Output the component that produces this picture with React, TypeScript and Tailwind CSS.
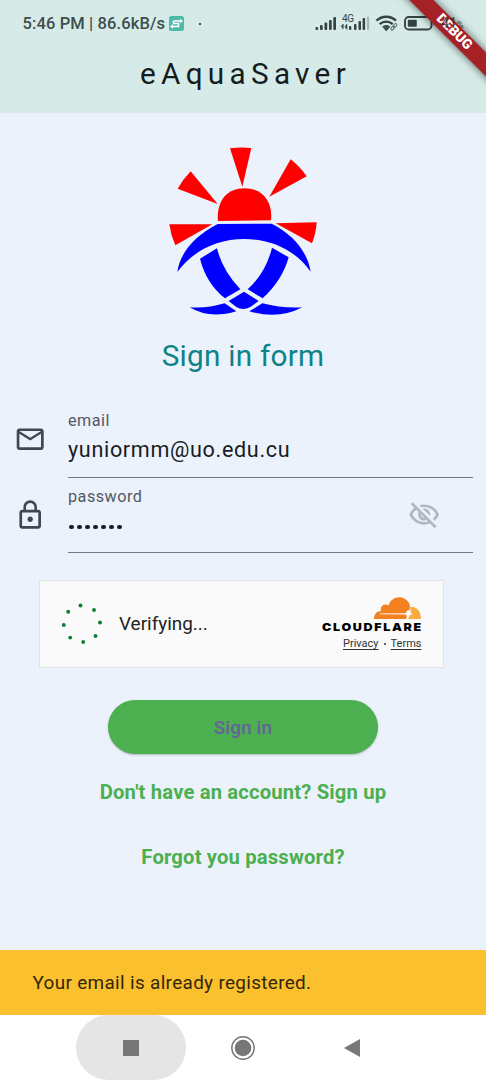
import type { ReactNode } from "react";

function StatusBar() {
  return (
    <div className="flex h-[48px] items-center pl-[22.5px] text-[#3d4d4d]">
      <span className="w-[143px] whitespace-nowrap text-[16.5px] leading-[20px] font-medium tracking-[0.12px]">5:46 PM | 86.6kB/s</span>
      <svg className="ml-[3.5px] h-[15px] w-[15px] -translate-y-[1px]" viewBox="0 0 15 15">
        <rect width="15" height="15" rx="2.5" fill="#4cb9a9" />
        <path d="M4.500 5H13M4.500 5V7.500H8M2 10.500h7.500V7.500H7" fill="none" stroke="#fff" strokeWidth="1.500" />
        <path d="M11 2.800L14 5L11 7.200ZM4 8.300L1 10.500L4 12.700Z" fill="#fff" />
      </svg>
      <span className="ml-[14.5px] h-[2px] w-[2px] bg-[#3d4d4d]" />
      <svg className="ml-[113.5px] h-[26px] w-[154px]" viewBox="0 0 154 26">
        <g fill="#344342" transform="translate(0 1)">
          <rect x="1.5" y="15" width="2.7" height="3" rx="1" />
          <rect x="6" y="13" width="2.7" height="5" rx="1" />
          <rect x="10.5" y="10.5" width="2.7" height="7.5" rx="1" />
          <rect x="15" y="8" width="2.7" height="10" rx="1" />
          <rect x="19.3" y="5" width="2.7" height="13" rx="1" />
          <path d="M28.300 16.500v-2H27l2.300-2.500v4.500zM32 12.500v2h-1.300L33 17.500v-5z" stroke="#344342" strokeWidth=".5" />
          <rect x="35" y="14" width="2.3" height="4" rx="1" />
          <rect x="40" y="12" width="2.5" height="6" rx="1" />
          <rect x="44.5" y="9" width="2.5" height="9" rx="1" />
          <rect x="48.6" y="6" width="2.5" height="12" rx="1" />
          <rect x="53" y="4.5" width="2.2" height="13.5" rx="1" opacity=".3" />
        </g>
        <text x="28" y="11" fontSize="10" fill="#344342" textLength="12">4G</text>
        <g fill="none" stroke="#344342" strokeWidth="2.3">
          <path d="M62.500 9.700a14 14 0 0 1 19.500 0M65.700 13.200a9.500 9.500 0 0 1 13 0M69 16.500a5 5 0 0 1 6.600 0" />
        </g>
        <path d="M69.500 17.200q2.800-2 5.600 0l-2.800 3z" fill="#344342" />
        <g fill="none" stroke="#5f6e6d" strokeWidth="1">
          <rect x="76.500" y="16" width="4.500" height="2.500" rx="1.2" transform="rotate(-50 78.5 17.2)" />
          <rect x="79" y="13.500" width="4.500" height="2.500" rx="1.2" transform="rotate(-50 81 15)" />
        </g>
        <rect x="91" y="6" width="26.5" height="12.5" rx="3.8" fill="none" stroke="#344342" strokeWidth="1.900" />
        <rect x="93.800" y="8.800" width="9" height="7" rx="1" fill="#344342" />
        <path d="M119.500 10.300v4.400q2-2.200 0-4.400" fill="#344342" />
      </svg>
    </div>
  );
}

function DebugBanner() {
  return (
    <div className="absolute top-0 right-0 h-[120px] w-[120px] overflow-hidden">
      <div className="absolute top-[24.2px] left-[-12px] flex h-[16.5px] w-[200px] rotate-45 items-center justify-center bg-[#a62126] text-[13.8px] leading-none font-black text-white shadow-[0_0_8px_rgba(0,0,0,0.65)]">
        <span>DEBUG</span>
      </div>
      <span className="absolute top-[15px] left-[75px] text-[14px] leading-[16px] font-medium text-[#30201f]/75">41<span className="text-[9px]">%</span></span>
    </div>
  );
}

function Logo() {
  return (
    <svg className="h-[190px] w-[180px]" viewBox="0 0 540 570">
      <g fill="#f00">
        <path d="M225 40Q257 36 289 39L262 155Z" />
        <path d="M407 73Q434 94 455 124L343 185Z" />
        <path d="M107 109L188 207L68 161Q84 133 107 109Z" />
        <path d="M43 268L172 268L61 331Q47 300 43 268Z" />
        <path d="M362 265L485 262Q483 295 471 325Z" />
        <path d="M189 258C184 202 213 160 268 160C325 160 354 202 348 256Z" />
      </g>
      <g fill="#00f">
        <path d="M188 267L350 266C414 298 457 349 467 410C422 346 350 312 268 312C187 312 117 345 67 411C75 353 120 302 188 267Z" />
        <path d="M135 371L186 340Q201 404 256 463L210 490Q154 446 135 371Z" />
        <path d="M351 338L401 367Q382 436 323 490L278 463Q333 413 351 338Z" />
        <path d="M267 470L311 498L286 516Q264 528 244 516L221 498Z" />
        <path d="M104 517Q157 521 209 505L244 529Q163 553 104 517Z" />
        <path d="M442 517Q379 520 322 505L283 529Q370 555 442 517Z" />
      </g>
    </svg>
  );
}

function Field({ icon, label, children }: { icon: ReactNode; label: string; children: ReactNode }) {
  return (
    <div className="flex h-[75.5px] pr-[13.5px]">
      <div className="flex w-[68px] shrink-0 items-center pb-[1px] pl-[13.5px]">{icon}</div>
      <div className="relative flex grow flex-col border-b border-[#747981] pt-[8px]">
        <span className="text-[16.2px] leading-[22px] tracking-[0.5px] text-[#535862]">{label}</span>
        {children}
      </div>
    </div>
  );
}

function MailIcon() {
  return (
    <svg className="h-[32.4px] w-[32.4px]" viewBox="0 0 24 24" fill="#42464e">
      <path d="M22 6c0-1.100-.9-2-2-2H4c-1.100 0-2 .9-2 2v12c0 1.100.9 2 2 2h16c1.100 0 2-.9 2-2V6zm-2 0-8 5-8-5h16zm0 12H4V8l8 5 8-5v10z" />
    </svg>
  );
}

function LockIcon() {
  return (
    <svg className="h-[32.4px] w-[32.4px]" viewBox="0 0 24 24" fill="#42464e">
      <path d="M12 17c1.100 0 2-.9 2-2s-.9-2-2-2-2 .9-2 2 .9 2 2 2zm6-9h-1V6c0-2.760-2.240-5-5-5S7 3.240 7 6v2H6c-1.100 0-2 .9-2 2v10c0 1.100.9 2 2 2h12c1.100 0 2-.9 2-2V10c0-1.100-.9-2-2-2zM8.900 6c0-1.710 1.390-3.100 3.100-3.100s3.100 1.390 3.100 3.100v2H8.900V6zM18 20H6V10h12v10z" />
    </svg>
  );
}

function EyeOffIcon() {
  return (
    <svg className="h-[32.4px] w-[32.4px]" viewBox="0 0 24 24" fill="#b2b6bd">
      <path d="M12 6c3.790 0 7.170 2.130 8.820 5.500-.59 1.220-1.420 2.270-2.410 3.120l1.410 1.410c1.390-1.230 2.490-2.770 3.180-4.530C21.270 7.110 17 4 12 4c-1.270 0-2.490.2-3.640.57l1.650 1.650C10.660 6.090 11.320 6 12 6zm-1.070 1.140L13 9.210c.57.25 1.030.71 1.280 1.280l2.070 2.070c.08-.34.14-.7.14-1.070C16.500 9.010 14.480 7 12 7c-.37 0-.72.05-1.070.14zM2.010 3.870l2.680 2.680C3.060 7.830 1.770 9.530 1 11.500 2.730 15.890 7 19 12 19c1.520 0 2.980-.29 4.320-.82l3.420 3.420 1.410-1.410L3.420 2.450 2.010 3.870zm7.500 7.500 2.610 2.610c-.04.01-.08.02-.12.02-1.380 0-2.500-1.120-2.500-2.500 0-.05.01-.08.01-.13zm-3.400-3.400 1.750 1.750c-.23.55-.36 1.150-.36 1.780 0 2.480 2.020 4.500 4.500 4.500.63 0 1.230-.13 1.770-.36l.98.98c-.88.24-1.800.38-2.750.38-3.790 0-7.170-2.130-8.820-5.500.7-1.430 1.720-2.610 2.930-3.530z" />
    </svg>
  );
}

const spinnerDots = [
  [21.5, 3.5], [35, 8], [41, 20.5], [36.5, 34], [24.2, 40], [11.2, 35.6], [4.800, 23], [9.200, 9.800],
];

function Turnstile() {
  return (
    <div className="ml-[39px] flex h-[88px] w-[405px] items-center border-[1.500px] border-[#e0e2e5] bg-[#fafafa] pl-[19px]">
      <svg className="h-[44px] w-[44px]" viewBox="0 0 44 44">
        {spinnerDots.map(([x, y]) => (
          <circle key={`${x}-${y}`} cx={x} cy={y} r="1.950" fill="#098035" />
        ))}
      </svg>
      <span className="ml-[16px] w-[90px] text-[18.9px] leading-[24px] text-[#232323]">Verifying...</span>
      <div className="ml-auto mr-[20.500px] flex w-[102px] flex-col items-end pt-[2px]">
        <svg className="mr-[1.500px] h-[22px] w-[47px]" viewBox="0 0 47 22">
          <path d="M0 22C0 17 3 14 7 14C5.500 9 11 5.500 14.500 8.500C17-1 30-3 35 6C37 10 35.500 14 33.500 17L32 22Z" fill="#f48120" />
          <path d="M34 22L37 14.500L36 10.500C42 8.500 47 14 47 22Z" fill="#faad3f" />
          <path d="M6 16.400L31.500 16.200L34.300 12.500L35.500 15.800L39 17L35.500 18.300L34 21.500L32 17.500L6 17.300Z" fill="#fff" />
        </svg>
        <span className="mt-[1px] w-[101px] origin-left scale-x-[1.140] text-left font-['Inter'] text-[11px] leading-[14px] font-black tracking-[1.450px] text-black">CLOUDFLARE</span>
        <div className="mr-[1px] mt-[2.500px] flex items-center text-[11px] leading-[16px] text-[#333]">
          <span className="underline underline-offset-2">Privacy</span>
          <span className="mx-[5px] h-[2px] w-[2px] rounded-full bg-[#333]" />
          <span className="underline underline-offset-2">Terms</span>
        </div>
      </div>
    </div>
  );
}

function NavigationBar() {
  return (
    <nav className="flex h-[65px] bg-white pl-[76px]">
      <div className="flex w-[110px] items-center justify-center rounded-[33px] bg-[#e5e5e5]">
        <div className="h-[16px] w-[16px] bg-[#777]" />
      </div>
      <svg className="ml-[45px] mt-[20.500px] h-[24px] w-[24px]" viewBox="0 0 24 24">
        <circle cx="12" cy="12" r="11.200" fill="none" stroke="#777" strokeWidth="1.400" />
        <circle cx="12" cy="12" r="8.300" fill="#777" />
      </svg>
      <svg className="ml-[89px] mt-[23.500px] h-[18px] w-[16px]" viewBox="0 0 16 18">
        <path d="M0 9L16 0V18Z" fill="#777" />
      </svg>
    </nav>
  );
}

export default function App() {
  return (
    <main className="relative flex h-[1080px] w-[486px] flex-col overflow-hidden bg-[#ebf2fb] font-['Roboto',sans-serif]">
      <header className="h-[113px] bg-[#d6ebe8]">
        <StatusBar />
        <h1 className="pl-[5px] pt-[7px] text-center text-[29.700px] leading-[38px] tracking-[5.300px] text-[#151c1e]">eAquaSaver</h1>
      </header>
      <DebugBanner />
      <div className="mt-[22px] ml-[155px] h-[190px]">
        <Logo />
      </div>
      <h2 className="mt-[11px] h-[40px] text-center text-[29.700px] leading-[40px] tracking-[0.250px] text-[#0d8387]">Sign in form</h2>
      <form className="mt-[26px]">
        <Field icon={<MailIcon />} label="email">
          <span className="mt-[2.500px] text-[21.600px] leading-[30px] tracking-[0.650px] text-[#191c22]">yuniormm@uo.edu.cu</span>
        </Field>
        <Field icon={<LockIcon />} label="password">
          <div className="mt-[17px] flex gap-[3.200px] pl-[1px]">
            {[0, 1, 2, 3, 4, 5, 6].map((i) => (
              <span key={i} className="h-[4.800px] w-[4.800px] rounded-full bg-[#191c22]" />
            ))}
          </div>
          <div className="absolute top-[21px] right-[32px]">
            <EyeOffIcon />
          </div>
        </Field>
      </form>
      <div className="mt-[26.500px]">
        <Turnstile />
      </div>
      <button className="mx-auto mt-[32px] h-[54px] w-[270px] shrink-0 rounded-full bg-[#4caf50] text-[18.900px] leading-[55px] font-medium tracking-[0.130px] text-[#65639a] shadow-[0_1px_2px_rgba(0,0,0,0.25)]">Sign in</button>
      <a className="mt-[24px] text-center text-[20.250px] leading-[28px] font-bold tracking-[0.150px] text-[#4caf50]">Don't have an account? Sign up</a>
      <a className="mt-[37px] text-center text-[20.250px] leading-[28px] font-bold tracking-[0.150px] text-[#4caf50]">Forgot you password?</a>
      <footer className="mt-auto">
        <div className="flex h-[65px] items-center bg-[#fac02e] pt-[2px] pl-[32.500px] text-[18.900px] tracking-[0.340px] text-[#33260b]">Your email is already registered.</div>
        <NavigationBar />
      </footer>
    </main>
  );
}
